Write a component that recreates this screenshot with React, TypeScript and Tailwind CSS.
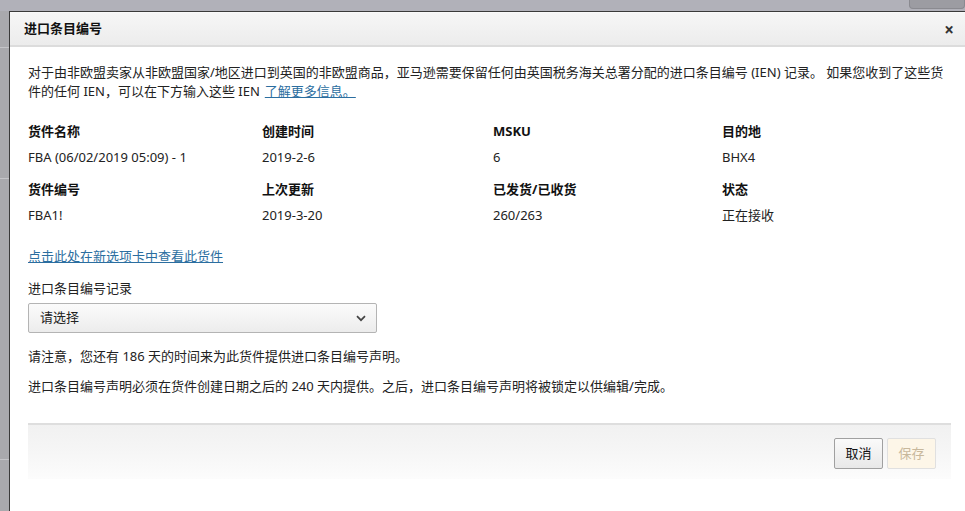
import React from "react";

const font = { fontFamily: '"Noto Sans", "Noto Sans CJK SC", sans-serif' };

function Field({ label, value }: { label: string; value: string }) {
  return (
    <div>
      <div className="font-bold leading-[19px] text-[#111]">{label}</div>
      <div className="mt-[7px] leading-[19px] text-[#222]">{value}</div>
    </div>
  );
}

export default function App() {
  return (
    <div className="w-[965px] h-[511px] overflow-hidden bg-[#b1b1b9] flex flex-col text-[13px]" style={font}>
      <div className="h-[11px] flex justify-end shrink-0">
        <div className="w-[56px] h-[9px] rounded-b-[4px] bg-[#9c9ca2] border border-t-0 border-[#8a8a90]" />
      </div>
      <div className="flex flex-1 min-h-0">
        <div className="w-[9px] shrink-0 bg-[#a9a9ad] flex flex-col">
          <div className="h-[36px]" />
          <div className="h-[1px] bg-[#c4c4c8]" />
          <div className="h-[130px]" />
          <div className="h-[1px] bg-[#c4c4c8]" />
          <div className="h-[280px]" />
          <div className="h-[1px] bg-[#c4c4c8]" />
        </div>
        <div className="flex-1 bg-white border-l border-t border-[#3a3a3a] flex flex-col">
          <div className="h-[35px] shrink-0 flex items-center justify-between pl-[14px] pr-[11px] bg-[linear-gradient(#f6f6f6,#ececec)] border-t border-[#fafafa] border-b-2 border-b-[#dcdcdc]">
            <span className="font-bold text-[13px] text-[#111]">进口条目编号</span>
            <span className="text-[17px] leading-none font-bold text-[#333]">×</span>
          </div>
          <div className="pl-[18px] pr-[14px] pt-[16px]">
            <p className="leading-[19px] text-[#222]">
              对于由非欧盟卖家从非欧盟国家/地区进口到英国的非欧盟商品，亚马逊需要保留任何由英国税务海关总署分配的进口条目编号 (IEN) 记录。 如果您收到了这些货件的任何 IEN，可以在下方输入这些 IEN
              <a className="ml-[5px] text-[#2b6ea0] underline">了解更多信息。</a>
            </p>
            <div className="mt-[21px] grid grid-cols-[234px_231px_229px_1fr] gap-y-[13px]">
              <Field label="货件名称" value="FBA (06/02/2019 05:09) - 1" />
              <Field label="创建时间" value="2019-2-6" />
              <Field label="MSKU" value="6" />
              <Field label="目的地" value="BHX4" />
              <Field label="货件编号" value="FBA1!" />
              <Field label="上次更新" value="2019-3-20" />
              <Field label="已发货/已收货" value="260/263" />
              <Field label="状态" value="正在接收" />
            </div>
            <a className="block mt-[22px] leading-[19px] text-[#2b6ea0] underline w-fit">点击此处在新选项卡中查看此货件</a>
            <div className="mt-[13px] leading-[19px] text-[#222]">进口条目编号记录</div>
            <div className="mt-[5px] w-[349px] h-[30px] border border-[#b4b4b4] rounded-[2px] bg-[linear-gradient(#fbfbfb,#ececec)] flex items-center justify-between pl-[11px] pr-[10px]">
              <span className="text-[#222]">请选择</span>
              <svg width="10" height="7" viewBox="0 0 10 7" fill="none">
                <path d="M1 1.2 L5 5.2 L9 1.2" stroke="#444" strokeWidth="1.7" />
              </svg>
            </div>
            <p className="mt-[14px] leading-[19px] text-[#222]">请注意，您还有 186 天的时间来为此货件提供进口条目编号声明。</p>
            <p className="mt-[11px] leading-[19px] text-[#222]">进口条目编号声明必须在货件创建日期之后的 240 天内提供。之后，进口条目编号声明将被锁定以供编辑/完成。</p>
            <div className="mt-[27px] h-[56px] border-t-2 border-[#dedede] bg-[linear-gradient(#f1f1f1,#f6f6f6_50%,#fcfcfc)] flex items-start justify-end pt-[13px] pr-[15px] gap-[4px]">
              <button className="w-[49px] h-[31px] border border-[#a0a0a0] rounded-[2px] bg-[linear-gradient(#fafafa,#e8e8e8)] text-[#111] text-[13px]">取消</button>
              <button className="w-[49px] h-[31px] border border-[#e0e0e0] rounded-[2px] bg-[#fdf6e8] text-[#c8b89c] text-[13px]">保存</button>
            </div>
          </div>
        </div>
      </div>
    </div>
  );
}
